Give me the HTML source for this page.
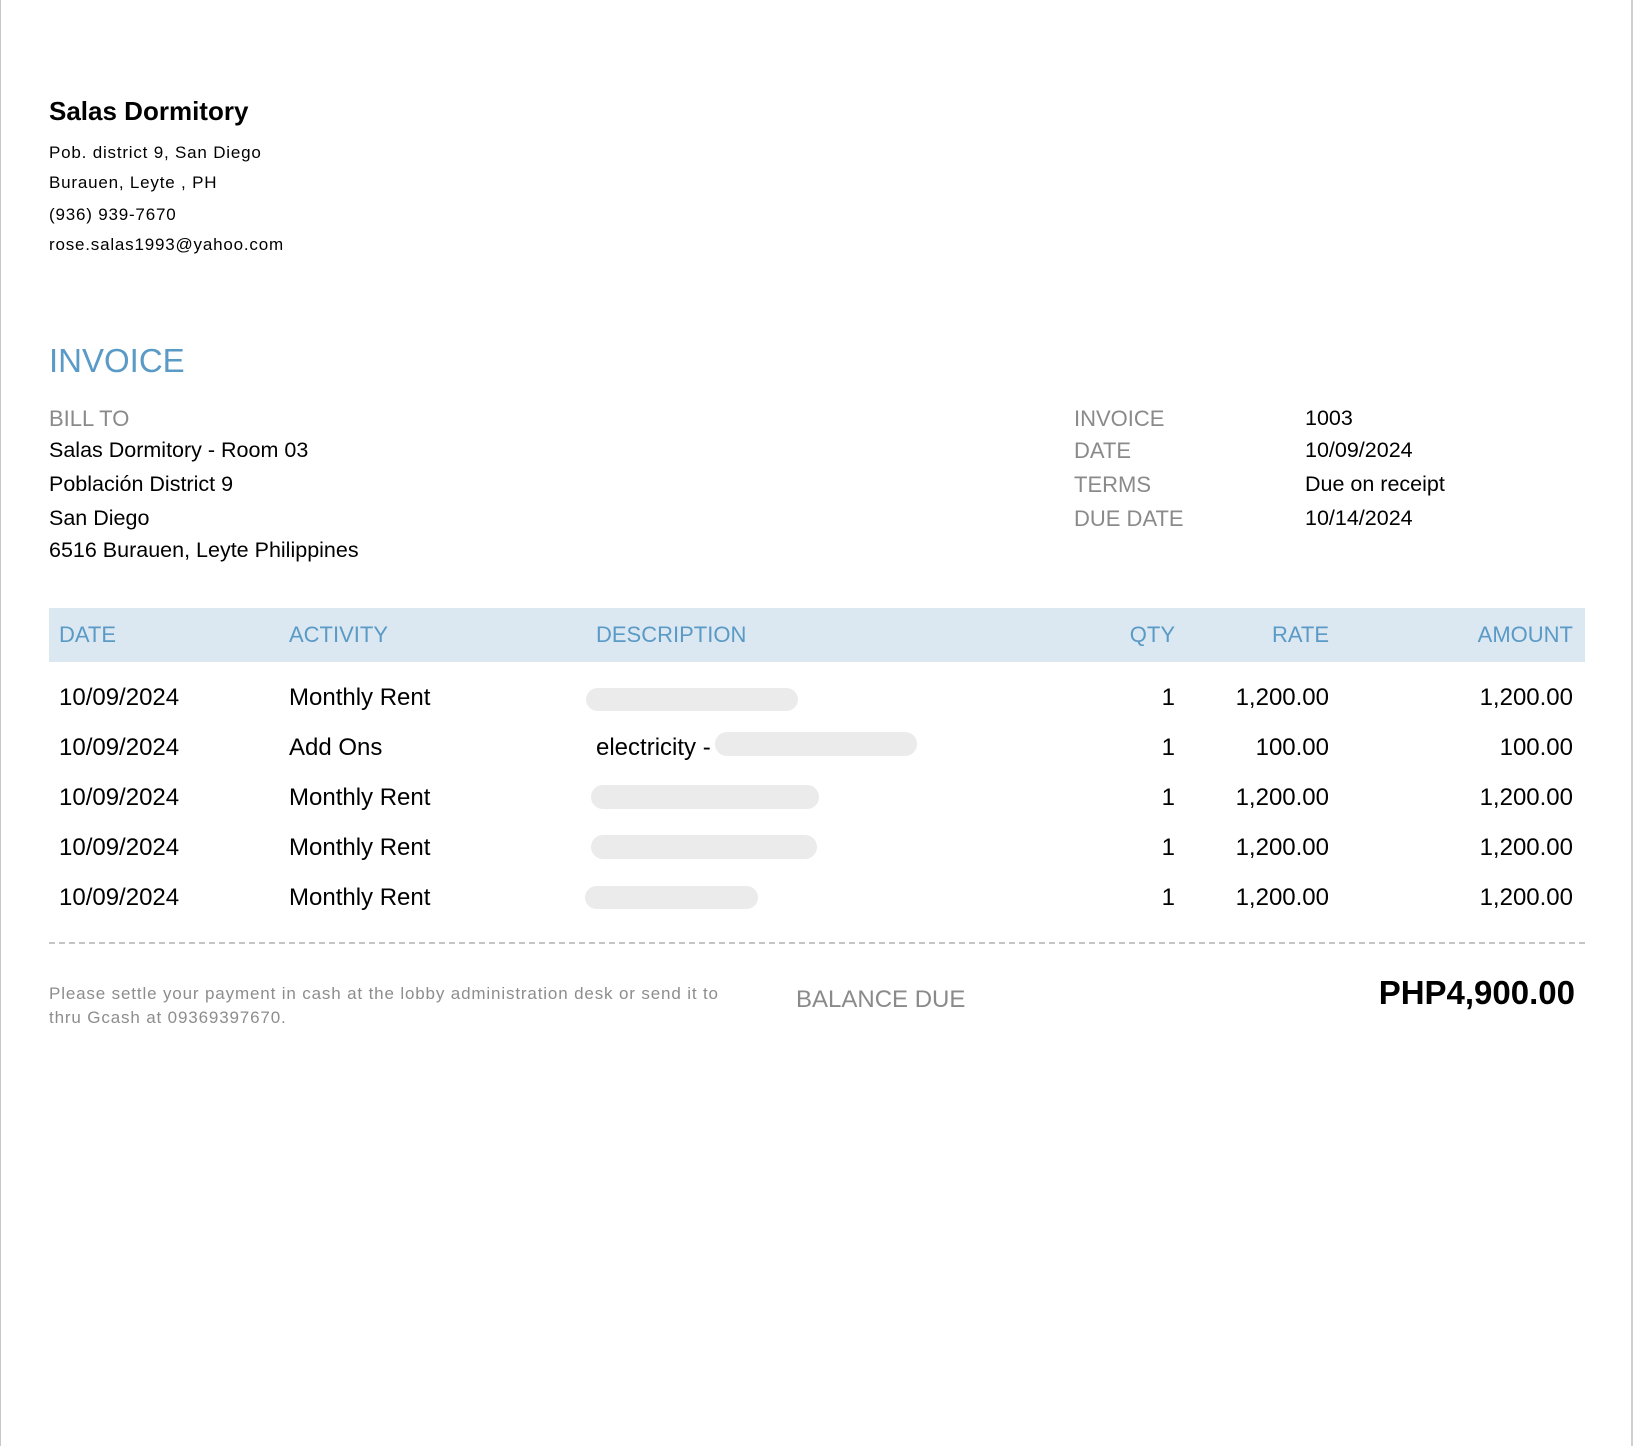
<!DOCTYPE html>
<html><head><meta charset="utf-8"><style>
html,body{margin:0;padding:0;background:#fff}
body{width:1634px;height:1446px;position:relative;overflow:hidden;font-family:"Liberation Sans",Arial,sans-serif;color:#000}
.a{position:absolute;white-space:nowrap;line-height:1}
.bl{color:#5a9ac6}
.gy{color:#8a8a8a}
.r{text-align:right}
.blob{position:absolute;background:#ebebeb;border-radius:12px}
</style></head><body>
<div style="position:absolute;left:0;top:0;width:1px;height:1446px;background:#c8c8c8"></div>
<div style="position:absolute;left:1631px;top:0;width:2px;height:1446px;background:#d0d0d0"></div>

<div class="a" style="left:49px;top:98px;font-size:26px;font-weight:bold">Salas Dormitory</div>
<div class="a" style="left:49px;top:144px;font-size:17px;letter-spacing:0.8px">Pob. district 9, San Diego</div>
<div class="a" style="left:49px;top:174px;font-size:17px;letter-spacing:0.8px">Burauen, Leyte , PH</div>
<div class="a" style="left:49px;top:206px;font-size:17px;letter-spacing:0.8px">(936) 939-7670</div>
<div class="a" style="left:49px;top:236px;font-size:17px;letter-spacing:0.8px">rose.salas1993@yahoo.com</div>

<div class="a bl" style="left:49px;top:344px;font-size:33px">INVOICE</div>

<div class="a gy" style="left:49px;top:408px;font-size:22px">BILL TO</div>
<div class="a" style="left:49px;top:440px;font-size:21.5px">Salas Dormitory - Room 03</div>
<div class="a" style="left:49px;top:474px;font-size:21.5px">Población District 9</div>
<div class="a" style="left:49px;top:508px;font-size:21.5px">San Diego</div>
<div class="a" style="left:49px;top:540px;font-size:21.5px">6516 Burauen, Leyte Philippines</div>

<div class="a gy" style="left:1074px;top:408px;font-size:22px">INVOICE</div>
<div class="a gy" style="left:1074px;top:440px;font-size:22px">DATE</div>
<div class="a gy" style="left:1074px;top:474px;font-size:22px">TERMS</div>
<div class="a gy" style="left:1074px;top:508px;font-size:22px">DUE DATE</div>
<div class="a" style="left:1305px;top:408px;font-size:21.5px">1003</div>
<div class="a" style="left:1305px;top:440px;font-size:21.5px">10/09/2024</div>
<div class="a" style="left:1305px;top:474px;font-size:21.5px">Due on receipt</div>
<div class="a" style="left:1305px;top:508px;font-size:21.5px">10/14/2024</div>

<div style="position:absolute;left:49px;top:608px;width:1536px;height:54px;background:#dce8f1"></div>
<div class="a bl" style="left:59px;top:624px;font-size:22px">DATE</div>
<div class="a bl" style="left:289px;top:624px;font-size:22px">ACTIVITY</div>
<div class="a bl" style="left:596px;top:624px;font-size:22px">DESCRIPTION</div>
<div class="a bl r" style="left:1000px;width:175px;top:624px;font-size:22px">QTY</div>
<div class="a bl r" style="left:1100px;width:229px;top:624px;font-size:22px">RATE</div>
<div class="a bl r" style="left:1300px;width:273px;top:624px;font-size:22px">AMOUNT</div>

<div class="a" style="left:59px;top:686px;font-size:24px">10/09/2024</div>
<div class="a" style="left:289px;top:686px;font-size:24px">Monthly Rent</div>
<div class="a r" style="left:1000px;width:175px;top:686px;font-size:24px">1</div>
<div class="a r" style="left:1100px;width:229px;top:686px;font-size:24px">1,200.00</div>
<div class="a r" style="left:1300px;width:273px;top:686px;font-size:24px">1,200.00</div>
<div class="blob" style="left:586px;top:688px;width:212px;height:23px"></div>

<div class="a" style="left:59px;top:736px;font-size:24px">10/09/2024</div>
<div class="a" style="left:289px;top:736px;font-size:24px">Add Ons</div>
<div class="a" style="left:596px;top:736px;font-size:24px">electricity -</div>
<div class="a r" style="left:1000px;width:175px;top:736px;font-size:24px">1</div>
<div class="a r" style="left:1100px;width:229px;top:736px;font-size:24px">100.00</div>
<div class="a r" style="left:1300px;width:273px;top:736px;font-size:24px">100.00</div>
<div class="blob" style="left:715px;top:732px;width:202px;height:24px"></div>

<div class="a" style="left:59px;top:786px;font-size:24px">10/09/2024</div>
<div class="a" style="left:289px;top:786px;font-size:24px">Monthly Rent</div>
<div class="a r" style="left:1000px;width:175px;top:786px;font-size:24px">1</div>
<div class="a r" style="left:1100px;width:229px;top:786px;font-size:24px">1,200.00</div>
<div class="a r" style="left:1300px;width:273px;top:786px;font-size:24px">1,200.00</div>
<div class="blob" style="left:591px;top:785px;width:228px;height:24px"></div>

<div class="a" style="left:59px;top:836px;font-size:24px">10/09/2024</div>
<div class="a" style="left:289px;top:836px;font-size:24px">Monthly Rent</div>
<div class="a r" style="left:1000px;width:175px;top:836px;font-size:24px">1</div>
<div class="a r" style="left:1100px;width:229px;top:836px;font-size:24px">1,200.00</div>
<div class="a r" style="left:1300px;width:273px;top:836px;font-size:24px">1,200.00</div>
<div class="blob" style="left:591px;top:835px;width:226px;height:24px"></div>

<div class="a" style="left:59px;top:886px;font-size:24px">10/09/2024</div>
<div class="a" style="left:289px;top:886px;font-size:24px">Monthly Rent</div>
<div class="a r" style="left:1000px;width:175px;top:886px;font-size:24px">1</div>
<div class="a r" style="left:1100px;width:229px;top:886px;font-size:24px">1,200.00</div>
<div class="a r" style="left:1300px;width:273px;top:886px;font-size:24px">1,200.00</div>
<div class="blob" style="left:585px;top:886px;width:173px;height:23px"></div>

<div style="position:absolute;left:49px;top:942px;width:1536px;height:0;border-top:2px dashed #c4c4c4"></div>

<div class="a" style="left:49px;top:985px;font-size:17px;letter-spacing:0.85px;color:#8d8d8d">Please settle your payment in cash at the lobby administration desk or send it to</div>
<div class="a" style="left:49px;top:1009px;font-size:17px;letter-spacing:0.85px;color:#8d8d8d">thru Gcash at 09369397670.</div>
<div class="a gy" style="left:796px;top:988px;font-size:24px">BALANCE DUE</div>
<div class="a r" style="left:1200px;width:375px;top:976px;font-size:33px;font-weight:bold;color:#000">PHP4,900.00</div>
</body></html>
